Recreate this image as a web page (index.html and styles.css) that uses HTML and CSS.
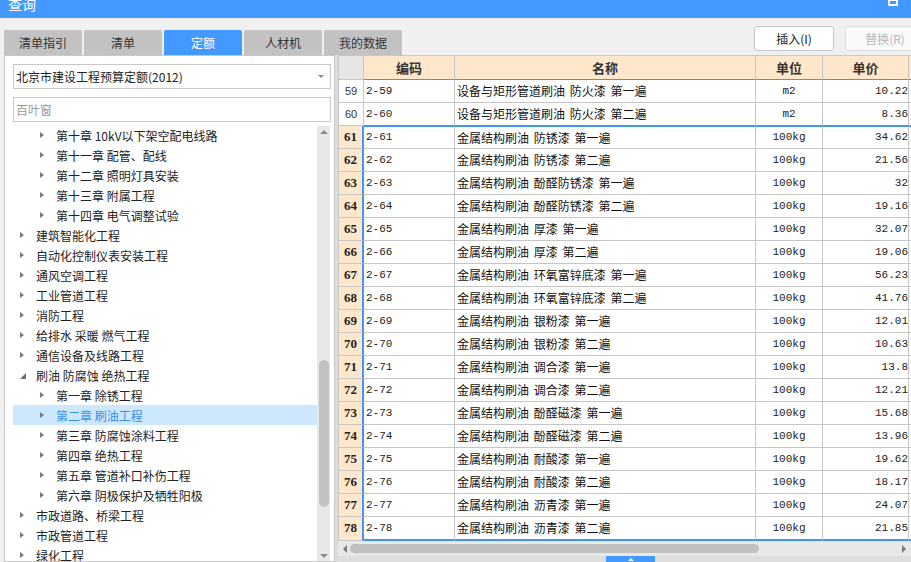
FILE: index.html
```html
<!DOCTYPE html>
<html lang="zh-CN">
<head>
<meta charset="utf-8">
<title>查询</title>
<link rel="stylesheet" href="styles.css">
</head>
<body>
<div class="window">
  <div class="titlebar">
    <span class="title">查询</span>
    <span class="max-icon"></span>
  </div>
  <div class="toolbar">
    <div class="tabs">
      <div class="tab">清单指引</div>
      <div class="tab">清单</div>
      <div class="tab active">定额</div>
      <div class="tab">人材机</div>
      <div class="tab">我的数据</div>
    </div>
    <div class="actions">
      <button class="btn">插入(I)</button>
      <button class="btn disabled">替换(R)</button>
    </div>
  </div>
  <div class="content">
    <div class="left-panel">
      <div class="select"><span>北京市建设工程预算定额(2012)</span><span class="select-caret"></span></div>
      <div class="search">百叶窗</div>
      <div class="tree-wrap">
        <div class="tree">
          <div class="node l2"><span class="caret"></span><span>第十章 10kV以下架空配电线路</span></div>
          <div class="node l2"><span class="caret"></span><span>第十一章 配管、配线</span></div>
          <div class="node l2"><span class="caret"></span><span>第十二章 照明灯具安装</span></div>
          <div class="node l2"><span class="caret"></span><span>第十三章 附属工程</span></div>
          <div class="node l2"><span class="caret"></span><span>第十四章 电气调整试验</span></div>
          <div class="node l1"><span class="caret"></span><span>建筑智能化工程</span></div>
          <div class="node l1"><span class="caret"></span><span>自动化控制仪表安装工程</span></div>
          <div class="node l1"><span class="caret"></span><span>通风空调工程</span></div>
          <div class="node l1"><span class="caret"></span><span>工业管道工程</span></div>
          <div class="node l1"><span class="caret"></span><span>消防工程</span></div>
          <div class="node l1"><span class="caret"></span><span>给排水 采暖 燃气工程</span></div>
          <div class="node l1"><span class="caret"></span><span>通信设备及线路工程</span></div>
          <div class="node l1"><span class="caret open"></span><span>刷油 防腐蚀 绝热工程</span></div>
          <div class="node l2"><span class="caret"></span><span>第一章 除锈工程</span></div>
          <div class="node l2 selected"><span class="caret"></span><span>第二章 刷油工程</span></div>
          <div class="node l2"><span class="caret"></span><span>第三章 防腐蚀涂料工程</span></div>
          <div class="node l2"><span class="caret"></span><span>第四章 绝热工程</span></div>
          <div class="node l2"><span class="caret"></span><span>第五章 管道补口补伤工程</span></div>
          <div class="node l2"><span class="caret"></span><span>第六章 阴极保护及牺牲阳极</span></div>
          <div class="node l1"><span class="caret"></span><span>市政道路、桥梁工程</span></div>
          <div class="node l1"><span class="caret"></span><span>市政管道工程</span></div>
          <div class="node l1"><span class="caret"></span><span>绿化工程</span></div>
        </div>
        <div class="vscroll">
          <span class="arr-up"></span>
          <div class="vtrack"><div class="vthumb"></div></div>
          <span class="arr-down"></span>
        </div>
      </div>
    </div>
    <div class="splitter"></div>
    <div class="right-panel">
      <div class="grid">
        <div class="row head">
          <div class="c num"></div><div class="c">编码</div><div class="c">名称</div><div class="c">单位</div><div class="c">单价</div><div class="c fill"></div>
        </div>
        <div class="row"><div class="c num">59</div><div class="c code">2-59</div><div class="c name">设备与矩形管道刷油 防火漆 第一遍</div><div class="c unit">m2</div><div class="c price">10.22</div><div class="c fill"></div></div>
        <div class="row pre-sel"><div class="c num">60</div><div class="c code">2-60</div><div class="c name">设备与矩形管道刷油 防火漆 第二遍</div><div class="c unit">m2</div><div class="c price">8.36</div><div class="c fill"></div></div>
        <div class="row sel first"><div class="c num">61</div><div class="c code">2-61</div><div class="c name">金属结构刷油 防锈漆 第一遍</div><div class="c unit">100kg</div><div class="c price">34.62</div><div class="c fill"></div></div>
        <div class="row sel"><div class="c num">62</div><div class="c code">2-62</div><div class="c name">金属结构刷油 防锈漆 第二遍</div><div class="c unit">100kg</div><div class="c price">21.56</div><div class="c fill"></div></div>
        <div class="row sel"><div class="c num">63</div><div class="c code">2-63</div><div class="c name">金属结构刷油 酚醛防锈漆 第一遍</div><div class="c unit">100kg</div><div class="c price">32</div><div class="c fill"></div></div>
        <div class="row sel"><div class="c num">64</div><div class="c code">2-64</div><div class="c name">金属结构刷油 酚醛防锈漆 第二遍</div><div class="c unit">100kg</div><div class="c price">19.16</div><div class="c fill"></div></div>
        <div class="row sel"><div class="c num">65</div><div class="c code">2-65</div><div class="c name">金属结构刷油 厚漆 第一遍</div><div class="c unit">100kg</div><div class="c price">32.07</div><div class="c fill"></div></div>
        <div class="row sel"><div class="c num">66</div><div class="c code">2-66</div><div class="c name">金属结构刷油 厚漆 第二遍</div><div class="c unit">100kg</div><div class="c price">19.06</div><div class="c fill"></div></div>
        <div class="row sel"><div class="c num">67</div><div class="c code">2-67</div><div class="c name">金属结构刷油 环氧富锌底漆 第一遍</div><div class="c unit">100kg</div><div class="c price">56.23</div><div class="c fill"></div></div>
        <div class="row sel"><div class="c num">68</div><div class="c code">2-68</div><div class="c name">金属结构刷油 环氧富锌底漆 第二遍</div><div class="c unit">100kg</div><div class="c price">41.76</div><div class="c fill"></div></div>
        <div class="row sel"><div class="c num">69</div><div class="c code">2-69</div><div class="c name">金属结构刷油 银粉漆 第一遍</div><div class="c unit">100kg</div><div class="c price">12.01</div><div class="c fill"></div></div>
        <div class="row sel"><div class="c num">70</div><div class="c code">2-70</div><div class="c name">金属结构刷油 银粉漆 第二遍</div><div class="c unit">100kg</div><div class="c price">10.63</div><div class="c fill"></div></div>
        <div class="row sel"><div class="c num">71</div><div class="c code">2-71</div><div class="c name">金属结构刷油 调合漆 第一遍</div><div class="c unit">100kg</div><div class="c price">13.8</div><div class="c fill"></div></div>
        <div class="row sel"><div class="c num">72</div><div class="c code">2-72</div><div class="c name">金属结构刷油 调合漆 第二遍</div><div class="c unit">100kg</div><div class="c price">12.21</div><div class="c fill"></div></div>
        <div class="row sel"><div class="c num">73</div><div class="c code">2-73</div><div class="c name">金属结构刷油 酚醛磁漆 第一遍</div><div class="c unit">100kg</div><div class="c price">15.68</div><div class="c fill"></div></div>
        <div class="row sel"><div class="c num">74</div><div class="c code">2-74</div><div class="c name">金属结构刷油 酚醛磁漆 第二遍</div><div class="c unit">100kg</div><div class="c price">13.96</div><div class="c fill"></div></div>
        <div class="row sel"><div class="c num">75</div><div class="c code">2-75</div><div class="c name">金属结构刷油 耐酸漆 第一遍</div><div class="c unit">100kg</div><div class="c price">19.62</div><div class="c fill"></div></div>
        <div class="row sel"><div class="c num">76</div><div class="c code">2-76</div><div class="c name">金属结构刷油 耐酸漆 第二遍</div><div class="c unit">100kg</div><div class="c price">18.17</div><div class="c fill"></div></div>
        <div class="row sel"><div class="c num">77</div><div class="c code">2-77</div><div class="c name">金属结构刷油 沥青漆 第一遍</div><div class="c unit">100kg</div><div class="c price">24.07</div><div class="c fill"></div></div>
        <div class="row sel last"><div class="c num">78</div><div class="c code">2-78</div><div class="c name">金属结构刷油 沥青漆 第二遍</div><div class="c unit">100kg</div><div class="c price">21.85</div><div class="c fill"></div></div>
      </div>
      <div class="hscroll">
        <span class="arr-left"></span>
        <div class="hthumb"></div>
        <span class="arr-right"></span>
      </div>
      <div class="bottom-strip"><span class="collapse-tab"><span class="tab-arrow"></span></span></div>
    </div>
  </div>
</div>
</body>
</html>
```

FILE: styles.css
```css
* { box-sizing: border-box; }
html, body { margin: 0; padding: 0; }
body {
  width: 911px;
  height: 562px;
  overflow: hidden;
  background: #f0f0f0;
  font-family: "Noto Sans CJK SC", "Microsoft YaHei", sans-serif;
  font-size: 12px;
  color: #222;
}
.window { width: 911px; height: 562px; display: flex; flex-direction: column; overflow: hidden; }

/* title bar */
.titlebar {
  height: 18px;
  flex: none;
  background: #4499ff;
  color: #fff;
  display: flex;
  align-items: flex-start;
  overflow: hidden;
}
.title { font-size: 14px; line-height: 8px; margin-left: 8px; }
.max-icon {
  margin-left: auto;
  margin-right: 13px;
  width: 10px;
  height: 6px;
  border: 2px solid #fff;
  border-top-width: 1px;
}

/* toolbar */
.toolbar {
  height: 37px;
  flex: none;
  display: flex;
  overflow: hidden;
}
.tabs { display: flex; align-self: flex-end; margin-left: 4px; gap: 2px; flex: none; }
.tab {
  width: 78px;
  height: 25px;
  line-height: 25px;
  text-align: center;
  background: #c2c2c2;
  color: #333;
  border-radius: 2px 2px 0 0;
}
.tab.active { background: #4499ff; color: #fff; }
.actions { display: flex; gap: 11px; margin-left: 352px; margin-top: 8px; flex: none; }
.btn {
  width: 80px;
  height: 25px;
  flex: none;
  background: #fff;
  border: 1px solid #c4c4c4;
  border-radius: 3px;
  font-family: "Noto Sans CJK SC", sans-serif;
  font-size: 12px;
  color: #222;
  padding: 0;
}
.btn.disabled { color: #b8b8b8; border-color: #dcdcdc; background: #fafafa; }

/* content */
.content { flex: 1; display: flex; min-height: 0; }
.left-panel {
  width: 331px;
  margin-left: 4px;
  height: 507px;
  flex: none;
  background: #fff;
  border: 1px solid #c8c8c8;
  padding: 8px 3px 0 8px;
  display: flex;
  flex-direction: column;
}
.select {
  height: 25px;
  border: 1px solid #c8c8c8;
  display: flex;
  align-items: center;
  padding-left: 2px;
  color: #222;
  flex: none;
}
.select-caret {
  margin-left: auto;
  margin-right: 6px;
  width: 0; height: 0;
  border-left: 3px solid transparent;
  border-right: 3px solid transparent;
  border-top: 3px solid #888;
}
.search {
  margin-top: 8px;
  height: 25px;
  border: 1px solid #c8c8c8;
  padding-left: 2px;
  line-height: 23px;
  color: #999;
  flex: none;
}
.tree-wrap {
  margin-top: 4px;
  width: 317px;
  flex: 1;
  display: flex;
  min-height: 0;
  overflow: hidden;
}
.tree { flex: 1; margin-top: -1px; overflow: hidden; }
.node {
  height: 20px;
  display: flex;
  align-items: center;
  white-space: nowrap;
  color: #222;
}
.node.l1 { padding-left: 7px; }
.node.l2 { padding-left: 27px; }
.caret {
  width: 0; height: 0;
  border-left: 4px solid #7a7a7a;
  border-top: 3.5px solid transparent;
  border-bottom: 3.5px solid transparent;
  margin-right: 12px;
  flex: none;
}
.caret.open {
  border-left: 6px solid transparent;
  border-top: 0;
  border-bottom: 6px solid #707070;
  margin-right: 10px;
  margin-top: 2px;
}
.node.selected { background: #cce8ff; color: #3a8ee6; }

.vscroll {
  width: 13px;
  flex: none;
  background: #e8e8e8;
  display: flex;
  flex-direction: column;
  align-items: center;
}
.arr-up {
  margin-top: 4px;
  width: 0; height: 0;
  border-left: 4px solid transparent;
  border-right: 4px solid transparent;
  border-bottom: 4px solid #8a8a8a;
}
.vtrack { flex: 1; width: 100%; display: flex; justify-content: center; }
.vthumb {
  margin-top: 226px;
  width: 10px;
  height: 147px;
  background: #c2c2c2;
  border-radius: 5px;
}
.arr-down {
  margin-bottom: 3px;
  width: 0; height: 0;
  border-left: 4px solid transparent;
  border-right: 4px solid transparent;
  border-top: 4px solid #8a8a8a;
}

.splitter { width: 3px; flex: none; background: #dcdcdc; }

/* right panel */
.right-panel {
  flex: 1;
  min-width: 0;
  display: flex;
  flex-direction: column;
  overflow: hidden;
}
.grid { border-top: 1px solid #c8c8c8; flex: none; }
.row {
  display: grid;
  grid-template-columns: 26px 91px 301px 67px 86px 10px;
  height: 23px;
  background: #fff;
}
.c {
  border-right: 1px solid #c6c6c6;
  border-bottom: 1px solid #c6c6c6;
  white-space: nowrap;
  overflow: hidden;
  line-height: 22px;
}
.c.fill { border-right: 0; }
.c.num {
  border-left: 1px solid #c6c6c6;
  text-align: center;
  font-family: "Liberation Sans", sans-serif;
  font-size: 11px;
  color: #333;
  background: #fff;
}
.row.head { height: 24px; }
.row.head .c {
  background: #ffe7cc;
  font-weight: bold;
  font-size: 13px;
  text-align: center;
  color: #333;
  line-height: 23px;
  border-bottom-color: #4096f0;
}
.row.head .c.num { background: #e6e6e6; border-bottom-color: #c6c6c6; }

.code { padding-left: 2px; font-family: "Liberation Mono", monospace; font-size: 11px; color: #222; }
.name { padding-left: 2px; font-size: 12px; word-spacing: 2px; color: #111; }
.unit { text-align: center; font-family: "Liberation Mono", monospace; font-size: 11px; color: #222; }
.price { text-align: right; font-family: "Liberation Mono", monospace; font-size: 11px; color: #222; padding-right: 0; }

.row.pre-sel .c:not(.num) { border-bottom-color: #4096f0; }
.row.sel .c.num {
  background: #ffe7cc;
  border-right: 2px solid #4096f0;
  font-family: "Liberation Serif", serif;
  font-weight: bold;
  font-size: 13px;
  color: #222;
}
.row.sel.first .c:not(.num) { border-top: 1px solid #4096f0; line-height: 21px; }
.row.sel.last { height: 24px; }
.row.sel.last .c:not(.num) { border-bottom: 2px solid #4096f0; }

.hscroll {
  height: 15px;
  flex: none;
  background: #e8e8e8;
  display: flex;
  align-items: center;
}
.arr-left {
  margin-left: 5px;
  width: 0; height: 0;
  border-top: 4px solid transparent;
  border-bottom: 4px solid transparent;
  border-right: 4px solid #7a7a7a;
}
.hthumb {
  margin-left: 3px;
  width: 409px;
  height: 9px;
  background: #c0c0c0;
  border-radius: 5px;
}
.arr-right {
  margin-left: auto;
  margin-right: 5px;
  width: 0; height: 0;
  border-top: 4px solid transparent;
  border-bottom: 4px solid transparent;
  border-left: 4px solid #7a7a7a;
}
.bottom-strip {
  flex: 1;
  background: #dedede;
  display: flex;
  align-items: flex-start;
}
.collapse-tab {
  margin-left: 268px;
  width: 49px;
  height: 6px;
  background: #4499ff;
  display: flex;
  justify-content: center;
  align-items: center;
}
.tab-arrow {
  width: 0; height: 0;
  border-left: 3px solid transparent;
  border-right: 3px solid transparent;
  border-bottom: 3px solid #fff;
}
```
